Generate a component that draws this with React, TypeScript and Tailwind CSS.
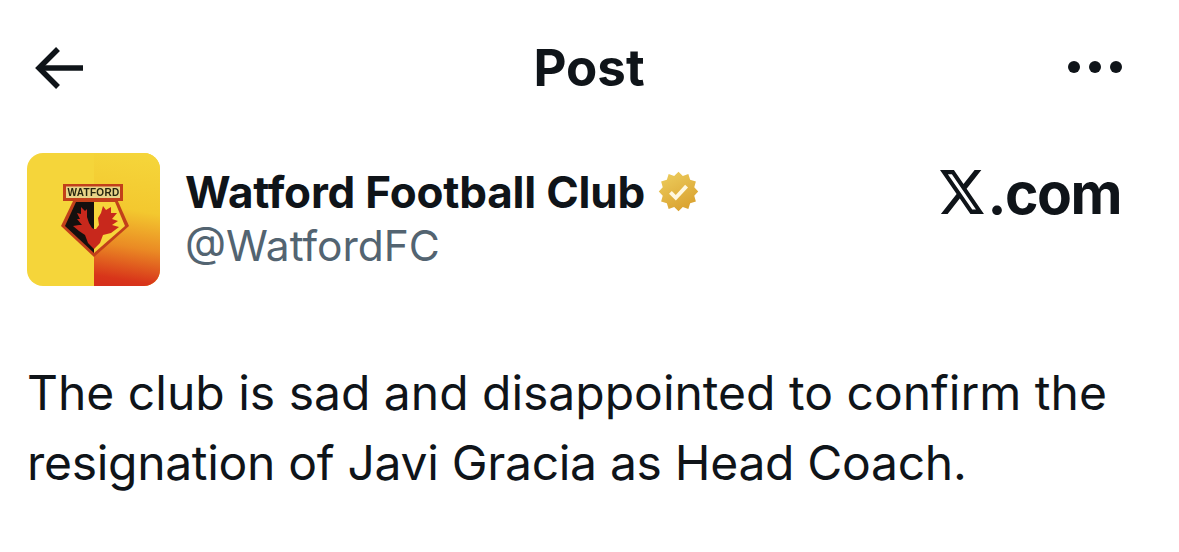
export default function App() {
  return (
    <div className="w-[1179px] h-[552px] bg-white overflow-hidden text-[#0f1419] font-['Inter','Liberation_Sans',sans-serif]">
      <header className="flex items-center justify-between h-[67px] mt-[34px] pl-[33px] pr-[57px]">
        <svg width="52" height="44" viewBox="0 0 52 44" fill="none" stroke="#0f1419" strokeWidth="5.500">
          <path d="M50 22H6" />
          <path d="M25 3 6 22l19 19" />
        </svg>
        <h1 className="text-[51px] leading-none font-bold ml-[25px]">Post</h1>
        <div className="flex gap-[9px] -mt-[2px]">
          <span className="w-[12px] h-[12px] rounded-full bg-[#0f1419]" />
          <span className="w-[12px] h-[12px] rounded-full bg-[#0f1419]" />
          <span className="w-[12px] h-[12px] rounded-full bg-[#0f1419]" />
        </div>
      </header>
      <section className="flex mt-[52px] pl-[27px] pr-[58px]">
        <div className="w-[133px] h-[133px] shrink-0">
          <svg className="blur-[0.4px]" width="133" height="133" viewBox="0 0 133 133">
            <defs>
              <linearGradient id="bg" x1="0.5" y1="0" x2="0.42" y2="1">
                <stop offset="0" stopColor="#f5d53a" />
                <stop offset="0.42" stopColor="#f3c82f" />
                <stop offset="0.7" stopColor="#ea8a24" />
                <stop offset="0.95" stopColor="#d8351a" />
                <stop offset="1" stopColor="#d6301a" />
              </linearGradient>
              <clipPath id="r"><rect width="133" height="133" rx="16" /></clipPath>
            </defs>
            <g clipPath="url(#r)">
              <rect width="133" height="133" fill="#f5d53a" />
              <rect x="67" width="66" height="133" fill="url(#bg)" />
            </g>
            <path d="M47 46H90L102 73 67 104 34 73Z" fill="#c2401a" />
            <path d="M49 49H67V100L38 73Z" fill="#15100e" />
            <path d="M67 49H88L98 73 67 100Z" fill="#f6d53a" />
            <path d="M67 96 61 90 58 82 52 78 46 73 52 72 55 72 50 66 53 66 50 60 54 61 54 54 58 58 60 56 60 64 62 70 65 75 67 76Z" fill="#c8281c" />
            <path d="M67 96 73 90 76 82 84 80 92 74 85 72 91 68 85 66 90 60 84 60 84 54 79 57 76 53 74 60 71 65 72 72 69 76 67 76Z" fill="#c8281c" />
            <rect x="36" y="31" width="60" height="17" fill="#c2401a" />
            <rect x="39" y="33.500" width="54" height="11.500" fill="#e8d488" />
            <text x="66.500" y="43" textAnchor="middle" fontFamily="Liberation Sans" fontSize="10" fontWeight="700" letterSpacing="0.300" fill="#26260f">WATFORD</text>
          </svg>
        </div>
        <div className="ml-[25px] flex-1 flex justify-between">
          <div className="mt-[11px]">
            <div className="flex items-center">
              <span className="text-[44px] leading-[56px] font-bold tracking-[-0.2px]">Watford Football Club</span>
              <svg className="ml-[12px] -mt-[2px]" width="43" height="43" viewBox="0 0 24 24">
                <defs>
                  <linearGradient id="gold" x1="0.2" y1="0" x2="0.7" y2="1">
                    <stop offset="0" stopColor="#eccc5c" />
                    <stop offset="1" stopColor="#d9a02e" />
                  </linearGradient>
                </defs>
                <path d="M12 1l2.400 2.300 3.100-1 1 3.200 3.200.9-.9 3.200L23 12l-2.200 2.400.9 3.200-3.200.9-1 3.200-3.100-1L12 23l-2.400-2.300-3.100 1-1-3.200-3.200-.9.900-3.200L1 12l2.200-2.400-.9-3.200 3.200-.9 1-3.200 3.100 1z" fill="url(#gold)" />
                <path d="M7.500 12.500l3 3 6-6.500" fill="none" stroke="#fff8e0" strokeWidth="2.200" />
              </svg>
            </div>
            <div className="text-[42.500px] leading-[50px] mt-[1px] text-[#536471]">@WatfordFC</div>
          </div>
          <div className="flex items-center h-[60px] mt-[10px]">
            <svg className="-mt-[2px]" width="44" height="44" viewBox="1.250 2.250 21.600 19.500" preserveAspectRatio="none" fill="#0f1419">
              <path d="M18.244 2.250h3.308l-7.227 8.260 8.502 11.240H16.170l-5.214-6.817L4.990 21.750H1.680l7.730-8.835L1.254 2.250H8.080l4.713 6.231zm-1.161 17.520h1.833L7.084 4.126H5.117z" />
            </svg>
            <span className="text-[57px] leading-none font-bold tracking-[-1.500px] ml-[3px]">.com</span>
          </div>
        </div>
      </section>
      <p className="mt-[72px] px-[27px] text-[48px] leading-[70px] whitespace-nowrap">
        <span className="block">The club is sad and disappointed to confirm the</span>
        <span className="block tracking-[-0.300px]">resignation of Javi Gracia as Head Coach.</span>
      </p>
    </div>
  );
}
